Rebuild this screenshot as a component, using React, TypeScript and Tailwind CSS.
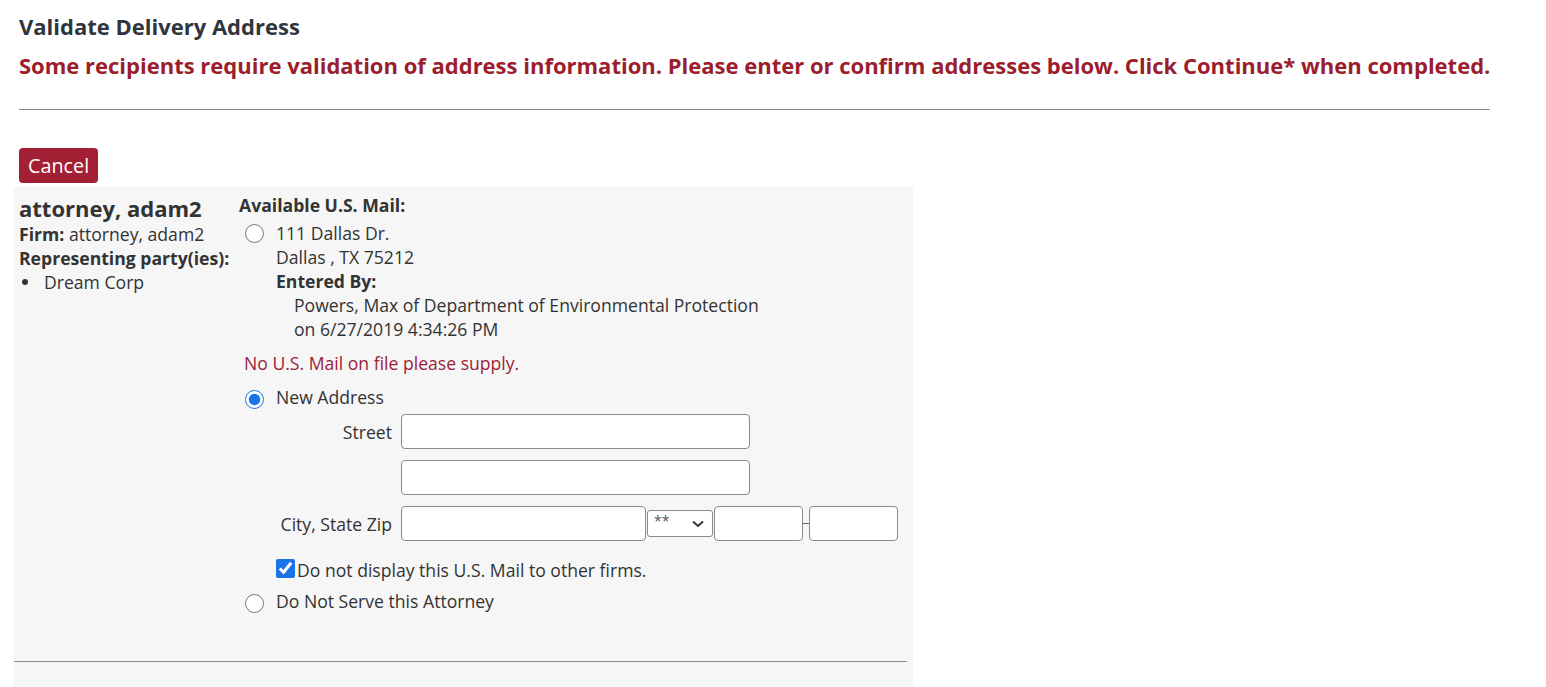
import React from 'react'

function Radio({ checked = false }: { checked?: boolean }) {
  return (
    <input
      type="radio"
      readOnly
      checked={checked}
      className="w-[19px] h-[19px] m-0 shrink-0 accent-[#1a73e8]"
    />
  )
}

function TextBox({ className }: { className: string }) {
  return <div className={`h-[35px] bg-white border border-[#8a8a8a] rounded-[4px] ${className}`} />
}

export default function App() {
  return (
    <div className="min-h-[687px] bg-white text-[#333] text-[17.6px] leading-[24px]" style={{ fontFamily: '"Open Sans", "Noto Sans", sans-serif' }}>
      <div className="ml-[19px] w-[1471px] pt-[12px]">
        <h1 className="text-[22px] leading-[28px] font-bold text-[#2f353d]">Validate Delivery Address</h1>
        <p className="mt-[11px] text-[22px] leading-[28px] font-bold text-[#9b1d2e] whitespace-nowrap">
          Some recipients require validation of address information. Please enter or confirm addresses below. Click Continue* when completed.
        </p>
        <hr className="mt-[30px] border-0 border-t border-[#8a8a8a]" />
        <button className="mt-[38px] h-[35px] px-[9px] rounded-[4px] bg-[#a31f34] text-white text-[19.8px] leading-[24px]">
          Cancel
        </button>
      </div>

      {/* Recipient panel */}
      <div className="ml-[14px] mt-[4px] w-[899px] bg-[#f6f6f6] pb-[40px]">
        <div className="flex">
          {/* Left: attorney */}
          <div className="w-[225px] pl-[5px] pt-[9px]">
            <div className="text-[22px] leading-[24px] font-bold">attorney, adam2</div>
            <div className="mt-[2px]">
              <span className="font-bold">Firm:</span> attorney, adam2
            </div>
            <div className="font-bold">Representing party(ies):</div>
            <ul className="flex items-center">
              <li className="flex items-center">
                <span className="ml-[3px] w-[6px] h-[6px] rounded-full bg-[#333]" />
                <span className="ml-[16px]">Dream Corp</span>
              </li>
            </ul>
          </div>

          {/* Right: addresses */}
          <div className="flex-1 pt-[6px]">
            <div className="font-bold">Available U.S. Mail:</div>
            <div className="flex mt-[4px]">
              <div className="pl-[6px] pt-[3px]">
                <Radio />
              </div>
              <div className="ml-[12px]">
                <div>111 Dallas Dr.</div>
                <div>Dallas , TX 75212</div>
                <div className="font-bold">Entered By:</div>
                <div className="pl-[18px]">
                  <div>Powers, Max of Department of Environmental Protection</div>
                  <div>on 6/27/2019 4:34:26 PM</div>
                </div>
              </div>
            </div>

            <div className="mt-[10px] pl-[5px] text-[#9c2336]">No U.S. Mail on file please supply.</div>

            <div className="flex mt-[10px]">
              <div className="pl-[6px] pt-[5px]">
                <Radio checked />
              </div>
              <div className="ml-[12px]">
                <div>New Address</div>
                <div className="mt-[5px] flex items-center">
                  <div className="w-[116px] text-right">Street</div>
                  <TextBox className="ml-[9px] w-[349px]" />
                </div>
                <div className="mt-[11px] flex items-center">
                  <div className="w-[116px]" />
                  <TextBox className="ml-[9px] w-[349px]" />
                </div>
                <div className="mt-[11px] flex items-center">
                  <div className="w-[116px] text-right">City, State Zip</div>
                  <TextBox className="ml-[9px] w-[245px]" />
                  <div className="ml-px w-[66px] h-[27px] bg-white border border-[#8a8a8a] rounded-[3px] flex items-center justify-between pl-[6px] pr-[8px]">
                    <span className="text-[14px] leading-[14px] text-[#555] -mt-[6px]">**</span>
                    <svg width="12" height="8" viewBox="0 0 12 8" fill="none">
                      <path d="M1 1.5 L6 6 L11 1.5" stroke="#333" strokeWidth="2" />
                    </svg>
                  </div>
                  <TextBox className="ml-px w-[89px]" />
                  <span className="w-[6px] h-px bg-[#666]" />
                  <TextBox className="w-[89px]" />
                </div>
                <div className="mt-[17px] flex items-center">
                  <input type="checkbox" readOnly checked className="w-[19px] h-[19px] m-0 -mt-[4px] accent-[#1a73e8]" />
                  <span className="ml-[2px]">Do not display this U.S. Mail to other firms.</span>
                </div>
              </div>
            </div>

            <div className="flex mt-[7px]">
              <div className="pl-[6px] pt-[5px]">
                <Radio />
              </div>
              <div className="ml-[12px]">Do Not Serve this Attorney</div>
            </div>
          </div>
        </div>
        <hr className="mt-[43px] w-[893px] border-0 border-t border-[#8a8a8a]" />
      </div>
    </div>
  )
}
